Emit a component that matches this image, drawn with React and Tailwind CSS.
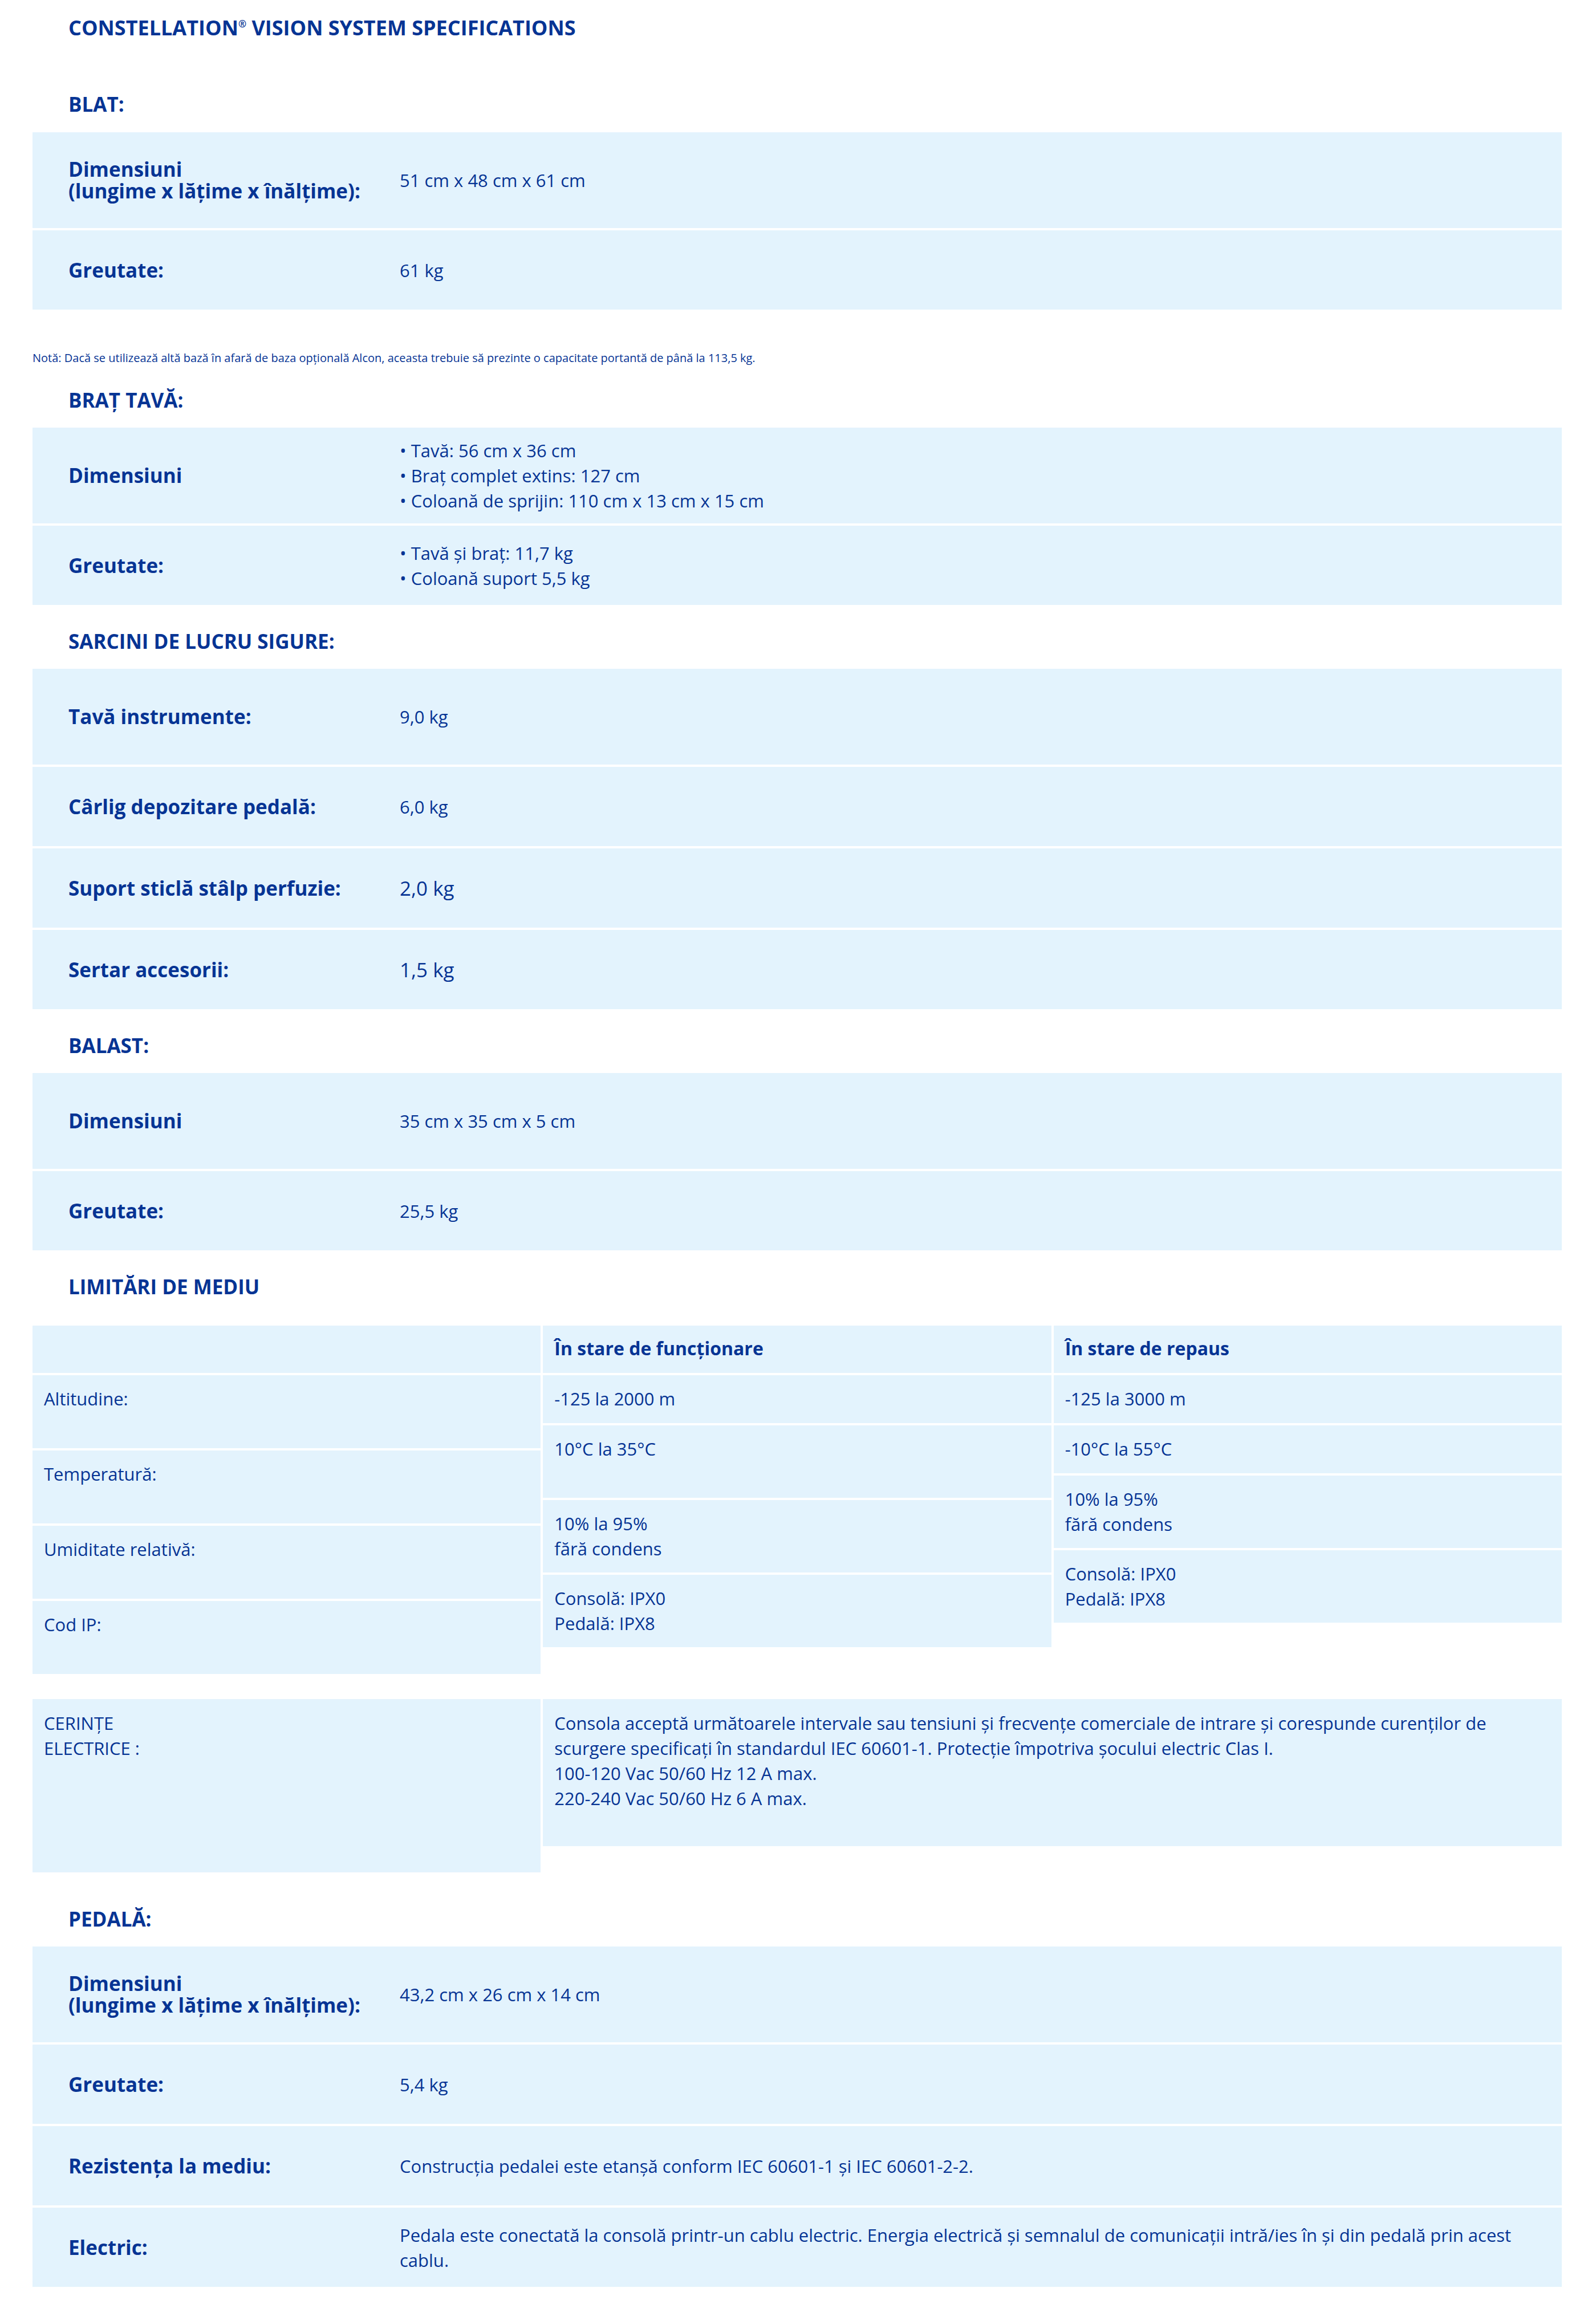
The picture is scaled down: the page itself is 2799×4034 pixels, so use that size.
import { Fragment } from "react";

const sections = [
  {
    title: "BLAT:",
    rows: [
      { label: ["Dimensiuni", "(lungime x lățime x înălțime):"], value: ["51 cm x 48 cm x 61 cm"] },
      { label: ["Greutate:"], value: ["61 kg"] },
    ],
  },
  {
    title: "BRAȚ TAVĂ:",
    mt: "mt-[36px]",
    rows: [
      {
        label: ["Dimensiuni"],
        value: ["• Tavă: 56 cm x 36 cm", "• Braț complet extins: 127 cm", "• Coloană de sprijin: 110 cm x 13 cm x 15 cm"],
      },
      { label: ["Greutate:"], value: ["• Tavă și braț: 11,7 kg", "• Coloană suport 5,5 kg"] },
    ],
  },
  {
    title: "SARCINI DE LUCRU SIGURE:",
    mt: "mt-[40px]",
    rows: [
      { label: ["Tavă instrumente:"], value: ["9,0 kg"] },
      { label: ["Cârlig depozitare pedală:"], value: ["6,0 kg"] },
      { label: ["Suport sticlă stâlp perfuzie:"], value: ["2,0 kg"], big: true },
      { label: ["Sertar accesorii:"], value: ["1,5 kg"], big: true },
    ],
  },
  {
    title: "BALAST:",
    mt: "mt-[40px]",
    rows: [
      { label: ["Dimensiuni"], value: ["35 cm x 35 cm x 5 cm"] },
      { label: ["Greutate:"], value: ["25,5 kg"] },
    ],
  },
];

const pedala = [
  { label: ["Dimensiuni", "(lungime x lățime x înălțime):"], value: ["43,2 cm x 26 cm x 14 cm"] },
  { label: ["Greutate:"], value: ["5,4 kg"] },
  { label: ["Rezistența la mediu:"], value: ["Construcția pedalei este etanșă conform IEC 60601-1 și IEC 60601-2-2."] },
  {
    label: ["Electric:"],
    value: [
      "Pedala este conectată la consolă printr-un cablu electric. Energia electrică și semnalul de comunicații intră/ies în și din pedală prin acest",
      "cablu.",
    ],
  },
];

const envCols = [
  [
    { text: [""], h: "h-[83px]" },
    { text: ["Altitudine:"], h: "h-[128px]" },
    { text: ["Temperatură:"], h: "h-[128px]" },
    { text: ["Umiditate relativă:"], h: "h-[128px]" },
    { text: ["Cod IP:"], h: "h-[128px]" },
  ],
  [
    { text: ["În stare de funcționare"], h: "h-[83px]", head: true },
    { text: ["-125 la 2000 m"], h: "h-[84px]" },
    { text: ["10°C la 35°C"], h: "h-[127px]" },
    { text: ["10% la 95%", "fără condens"], h: "h-[127px]" },
    { text: ["Consolă: IPX0", "Pedală: IPX8"], h: "h-[127px]" },
  ],
  [
    { text: ["În stare de repaus"], h: "h-[83px]", head: true },
    { text: ["-125 la 3000 m"], h: "h-[84px]" },
    { text: ["-10°C la 55°C"], h: "h-[84px]" },
    { text: ["10% la 95%", "fără condens"], h: "h-[127px]" },
    { text: ["Consolă: IPX0", "Pedală: IPX8"], h: "h-[127px]" },
  ],
];

function SectionTitle({ children, className = "" }) {
  return <h2 className={`pl-[63px] text-[35px] leading-[48px] font-bold ${className}`}>{children}</h2>;
}

function Lines({ items }) {
  return items.map((t, i) => (
    <Fragment key={i}>
      {i > 0 && <br />}
      {t}
    </Fragment>
  ));
}

function SpecRows({ rows }) {
  return (
    <div className="flex flex-col gap-[4px]">
      {rows.map((row, i) => (
        <div
          key={i}
          className={`flex items-center bg-[#e3f3fd] ${i === 0 ? "min-h-[168px]" : "min-h-[139px]"}`}
        >
          <p className="w-[644px] shrink-0 pl-[63px] text-[35px] leading-[38px] font-bold">
            <Lines items={row.label} />
          </p>
          <p className={`flex-1 pr-[22px] leading-[44px] ${row.big ? "text-[35px]" : "text-[31px]"}`}>
            <Lines items={row.value} />
          </p>
        </div>
      ))}
    </div>
  );
}

export default function App() {
  return (
    <div className="w-[2799px] bg-white pt-[25px] pr-[60px] pb-[21px] pl-[57px] font-['Open_Sans',sans-serif] text-[#063494]">
      <h1 className="pl-[63px] text-[36px] leading-[48px] font-bold">
        CONSTELLATION<span className="relative top-[-14px] text-[17px] font-bold">®</span> VISION SYSTEM SPECIFICATIONS
      </h1>

      {/* BLAT */}
      <SectionTitle className="mt-[79px] mb-[25px]">{sections[0].title}</SectionTitle>
      <SpecRows rows={sections[0].rows} />

      <p className="mt-[71px] text-[20px] leading-[28px]">
        Notă: Dacă se utilizează altă bază în afară de baza opțională Alcon, aceasta trebuie să prezinte o capacitate portantă de până la 113,5 kg.
      </p>

      {sections.slice(1).map((s) => (
        <div key={s.title}>
          <SectionTitle className={`${s.mt} mb-[24px]`}>{s.title}</SectionTitle>
          <SpecRows rows={s.rows} />
        </div>
      ))}

      {/* LIMITARI DE MEDIU */}
      <SectionTitle className="mt-[40px] mb-[44px]">LIMITĂRI DE MEDIU</SectionTitle>
      <div className="grid grid-cols-3 items-start gap-x-[4px]">
        {envCols.map((col, ci) => (
          <div key={ci} className="flex flex-col gap-[4px]">
            {col.map((cell, ri) => (
              <div
                key={ri}
                className={`bg-[#e3f3fd] px-[20px] leading-[44px] ${cell.h} ${
                  cell.head ? "pt-[18px] text-[32px] font-bold" : "pt-[19px] text-[31px]"
                }`}
              >
                <Lines items={cell.text} />
              </div>
            ))}
          </div>
        ))}
      </div>

      <div className="mt-[44px] grid grid-cols-3 items-start gap-x-[4px] text-[31px] leading-[44px]">
        <div className="h-[304px] bg-[#e3f3fd] px-[20px] pt-[20px]">
          CERINȚE
          <br />
          ELECTRICE :
        </div>
        <div className="col-span-2 h-[258px] bg-[#e3f3fd] px-[20px] pt-[20px]">
          <div>
            Consola acceptă următoarele intervale sau tensiuni și frecvențe comerciale de intrare și corespunde curenților de
            scurgere specificați în standardul IEC 60601-1. Protecție împotriva șocului electric Clas I.
          </div>
          <div>100-120 Vac 50/60 Hz 12 A max.</div>
          <div>220-240 Vac 50/60 Hz 6 A max.</div>
        </div>
      </div>

      {/* PEDALA */}
      <SectionTitle className="mt-[58px] mb-[24px]">PEDALĂ:</SectionTitle>
      <SpecRows rows={pedala} />
    </div>
  );
}
